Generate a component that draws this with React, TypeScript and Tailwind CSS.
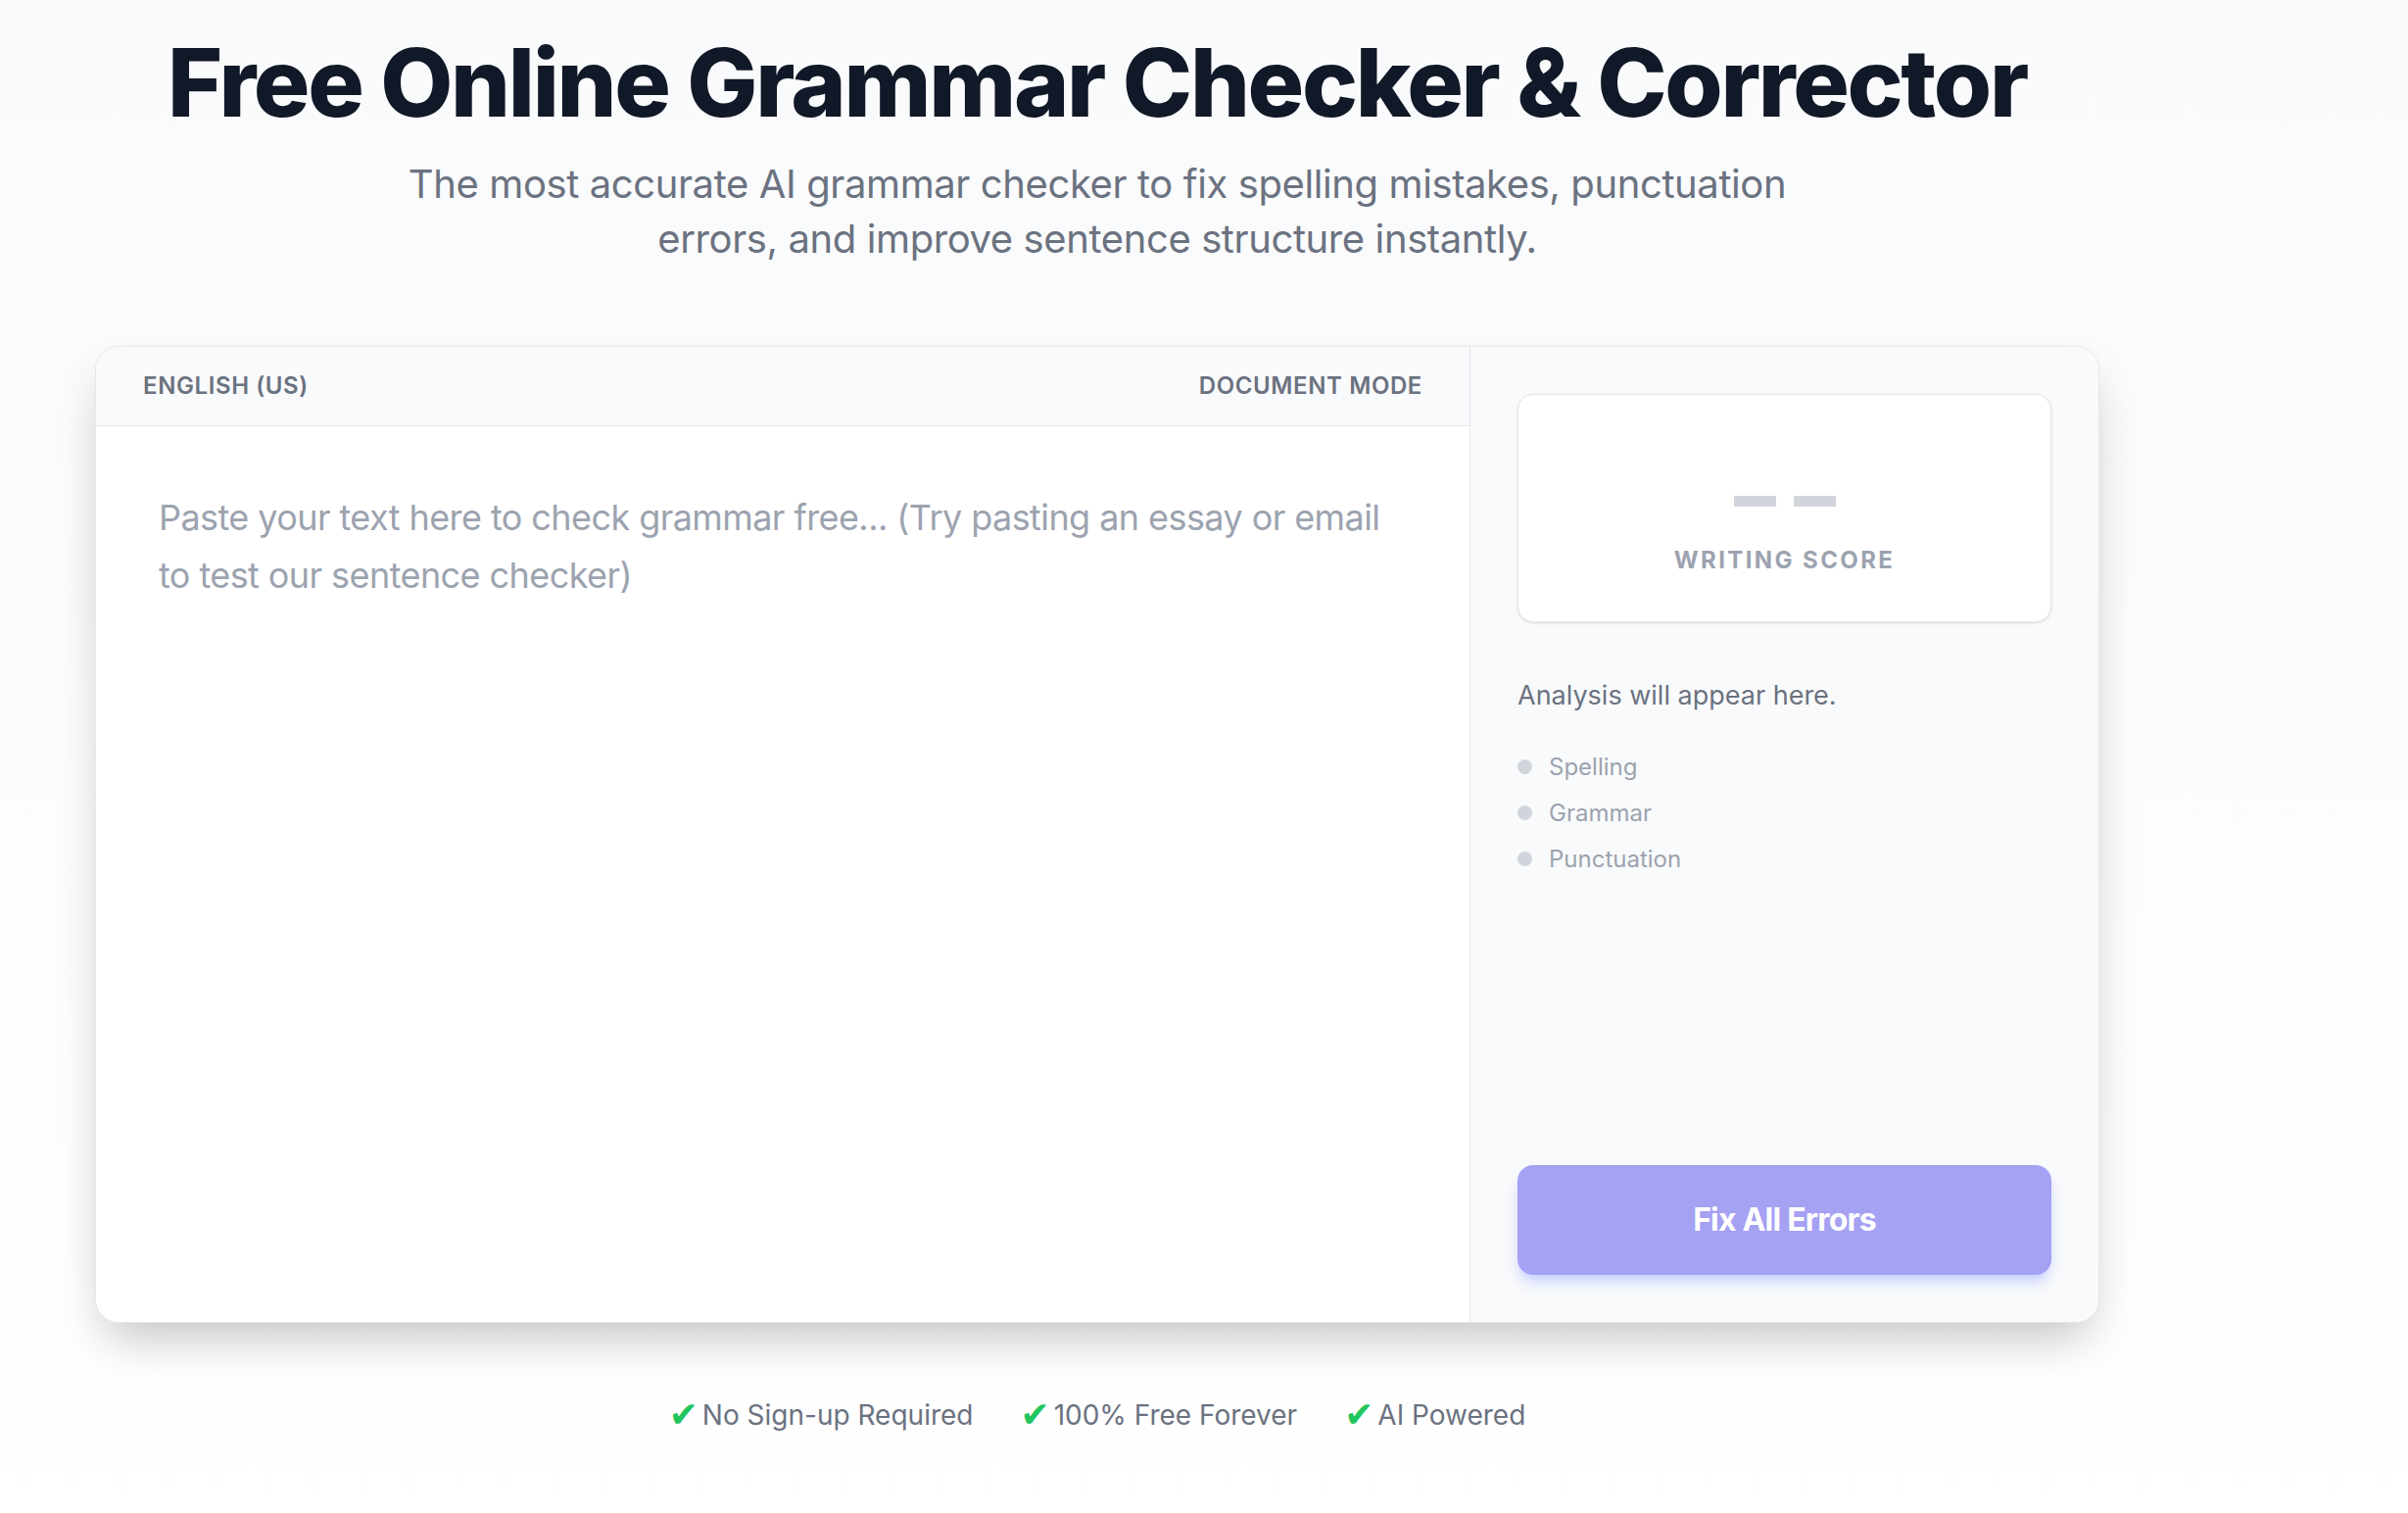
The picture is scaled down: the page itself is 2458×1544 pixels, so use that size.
import React from "react";

export default function App() {
  const font = { fontFamily: "Inter, 'Noto Sans', sans-serif" };
  return (
    <div className="min-h-screen w-full bg-gradient-to-b from-[#f9fafb] to-white" style={font}>
      <div className="w-[2240px] flex flex-col items-center pt-[36px]">
        <h1 className="text-[96px] leading-none font-extrabold tracking-[-0.024em] text-[#111827] whitespace-nowrap">
          Free Online Grammar Checker &amp; Corrector
        </h1>
        <p className="mt-7 max-w-[1430px] text-center text-[40px] leading-[56px] text-[#6b7280] tracking-[-0.01em]">
          The most accurate AI grammar checker to fix spelling mistakes, punctuation errors, and improve sentence structure instantly.
        </p>

        <div className="mt-[81px] w-[2046px] h-[997px] flex rounded-3xl border border-[#e5e7eb] bg-white shadow-2xl overflow-hidden">
          <div className="flex-1 flex flex-col">
            <div className="h-[81px] shrink-0 flex items-center justify-between px-12 bg-[#f9fafb] border-b border-[#e5e7eb]">
              <span className="text-[24px] font-semibold uppercase tracking-wide text-[#6b7280]">English (US)</span>
              <span className="text-[24px] font-semibold uppercase tracking-wide text-[#6b7280]">Document Mode</span>
            </div>
            <textarea
              className="flex-1 w-full resize-none bg-white p-16 text-[36px] leading-[1.625] text-[#374151] placeholder:text-[#9ca3af] outline-none tracking-[-0.016em]"
              placeholder="Paste your text here to check grammar free... (Try pasting an essay or email to test our sentence checker)"
            />
          </div>

          <div className="w-[642px] shrink-0 flex flex-col border-l border-[#e5e7eb] bg-[#f9fafb] p-12">
            <div className="h-[233px] shrink-0 flex flex-col items-center pt-[103px] rounded-2xl border border-[#e5e7eb] bg-white shadow-sm">
              <div className="flex gap-[18px]" aria-label="--">
                <div className="w-[43px] h-[11px] bg-[#d1d5db]" />
                <div className="w-[43px] h-[11px] bg-[#d1d5db]" />
              </div>
              <span className="mt-[43px] text-[24px] leading-[24px] font-bold uppercase tracking-[0.1em] text-[#9ca3af]">Writing Score</span>
            </div>

            <p className="mt-[54px] text-[27px] leading-[42px] text-[#6b7280]">Analysis will appear here.</p>

            <ul className="mt-7 flex flex-col">
              {["Spelling", "Grammar", "Punctuation"].map((t) => (
                <li key={t} className="flex items-center gap-[17px] text-[24px] leading-[47px] text-[#9ca3af]">
                  <span className="w-[15px] h-[15px] rounded-full bg-[#d1d5db]" />
                  {t}
                </li>
              ))}
            </ul>

            <button className="mt-auto h-[112px] w-full rounded-2xl bg-[#a5a1f3] text-white text-[32px] font-bold shadow-lg shadow-indigo-200 tracking-[-0.025em]">
              Fix All Errors
            </button>
          </div>
        </div>

        <div className="mt-[73px] flex items-center gap-[48px] text-[28px] leading-[42px] text-[#6b7280]">
          {["No Sign-up Required", "100% Free Forever", "AI Powered"].map((t) => (
            <span key={t} className="flex items-center gap-[4px]">
              <span className="text-[#22c55e] text-[36px] leading-none" style={{ fontFamily: "'DejaVu Sans', sans-serif" }}>✔</span>
              {t}
            </span>
          ))}
        </div>
      </div>
    </div>
  );
}
